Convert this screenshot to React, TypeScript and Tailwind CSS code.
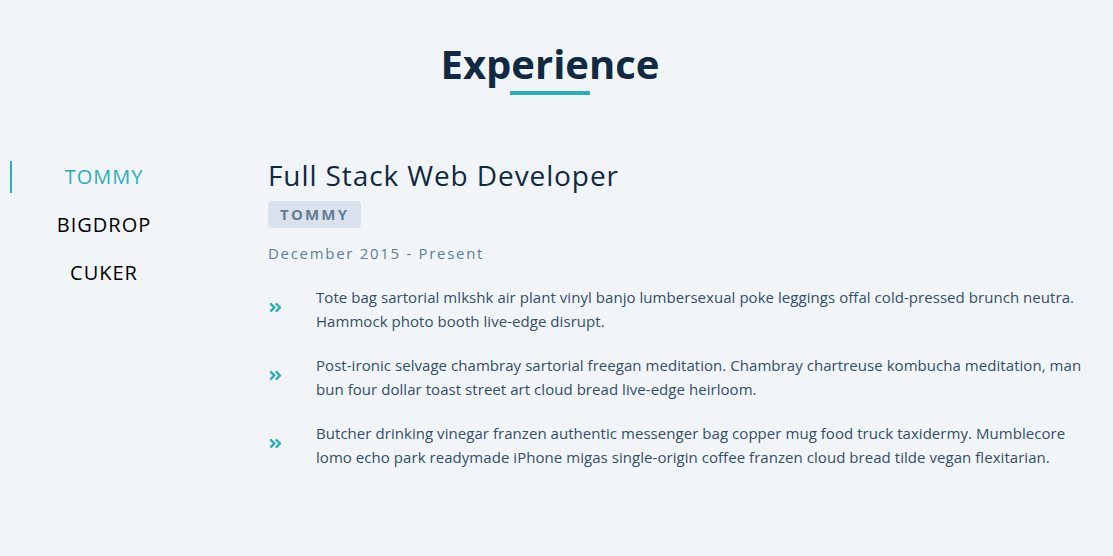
import React, { useState } from 'react';
import { FaAngleDoubleRight } from 'react-icons/fa';

const jobs = [
  {
    company: 'TOMMY',
    title: 'Full Stack Web Developer',
    dates: 'December 2015 - Present',
    duties: [
      'Tote bag sartorial mlkshk air plant vinyl banjo lumbersexual poke leggings offal cold-pressed brunch neutra. Hammock photo booth live-edge disrupt.',
      'Post-ironic selvage chambray sartorial freegan meditation. Chambray chartreuse kombucha meditation, man bun four dollar toast street art cloud bread live-edge heirloom.',
      'Butcher drinking vinegar franzen authentic messenger bag copper mug food truck taxidermy. Mumblecore lomo echo park readymade iPhone migas single-origin coffee franzen cloud bread tilde vegan flexitarian.',
    ],
  },
  { company: 'BIGDROP', title: '', dates: '', duties: [] },
  { company: 'CUKER', title: '', dates: '', duties: [] },
];

export default function App() {
  const [value, setValue] = useState(0);
  const job = jobs[0];

  return (
    <div
      className="min-h-[556px] bg-[#f1f5f8] pt-[40px] pr-[13px]"
      style={{ fontFamily: '"Open Sans", "Noto Sans", sans-serif' }}
    >
      {/* Title */}
      <div className="flex flex-col items-center">
        <h2 className="text-[40px] font-bold leading-[48px] text-[#102a43]">Experience</h2>
        <div className="mt-[3px] h-[4px] w-[80px] bg-[#2caeba]" />
      </div>

      <div className="mt-[62px] grid grid-cols-[186px_1fr] gap-x-[72px] pl-[10px] pr-[7px]">
        {/* Companies */}
        <div className="flex flex-col pt-[4px]">
          {jobs.map((item, index) => (
            <button
              key={item.company}
              onClick={() => setValue(index)}
              className={`mb-[16px] h-[32px] border-l-2 text-[20px] leading-none tracking-[1px] ${
                index === value ? 'border-[#2caeba] text-[#2caeba]' : 'border-transparent text-black'
              }`}
            >
              {item.company}
            </button>
          ))}
        </div>

        {/* Job info */}
        <article>
          <h3 className="text-[28px] font-normal leading-[36px] tracking-[0.9px] text-[#102a43]">{job.title}</h3>
          <h4 className="mt-[8px] inline-block rounded-[4px] bg-[#d9e2ec] px-[12px] py-[4px] text-[15px] font-bold leading-[19px] tracking-[2.2px] text-[#617d98]">
            {job.company}
          </h4>
          <p className="mt-[14px] text-[15px] leading-[22px] tracking-[1.7px] text-[#617d98]">{job.dates}</p>
          <div className="mt-[21px]">
            {job.duties.map((duty, i) => (
              <div key={i} className="mb-[20px] grid grid-cols-[auto_1fr] items-center gap-x-[33px]">
                <FaAngleDoubleRight className="-mt-[3px] h-[15px] w-[15px] text-[#2caeba]" />
                <p className="text-[15px] leading-[24px] tracking-[0.05px] text-[#334e68]">{duty}</p>
              </div>
            ))}
          </div>
        </article>
      </div>
    </div>
  );
}
